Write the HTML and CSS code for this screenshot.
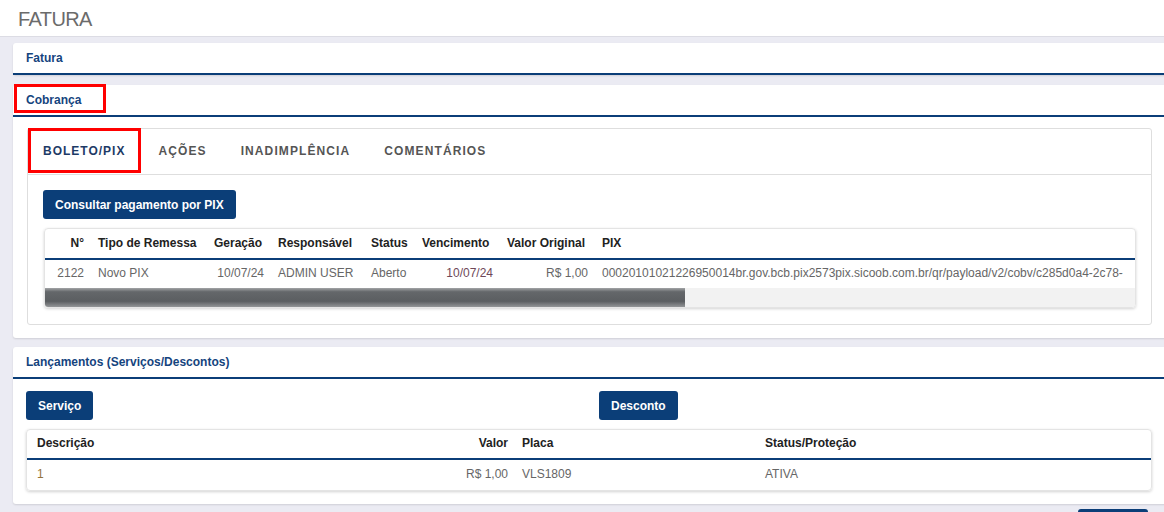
FILE: index.html
```html
<!DOCTYPE html>
<html lang="pt-BR">
<head>
  <meta charset="UTF-8">
  <meta name="viewport" content="width=device-width, initial-scale=1.0">
  <title>Fatura</title>
  <link rel="stylesheet" href="styles.css">
</head>
<body>
  <header class="page-title">FATURA</header>

  <main class="content">
    <!-- Fatura -->
    <section class="panel">
      <div class="panel-heading"><span class="panel-title">Fatura</span></div>
    </section>

    <!-- Cobrança -->
    <section class="panel">
      <div class="panel-heading">
        <span class="panel-title">Cobrança</span>
        <span class="mark mark-heading"></span>
      </div>
      <div class="panel-body">
        <div class="tab-card">
          <ul class="tabs">
            <li class="tab active">BOLETO/PIX<span class="mark mark-tab"></span></li>
            <li class="tab">AÇÕES</li>
            <li class="tab">INADIMPLÊNCIA</li>
            <li class="tab">COMENTÁRIOS</li>
          </ul>
          <div class="tab-content">
            <button class="btn">Consultar pagamento por PIX</button>
            <div class="grid-card">
              <div class="grid-scroll">
                <table class="grid grid-boleto">
                  <colgroup>
                    <col style="width: 46px">
                    <col style="width: 116px">
                    <col style="width: 64px">
                    <col style="width: 93px">
                    <col style="width: 51px">
                    <col style="width: 85px">
                    <col style="width: 95px">
                    <col style="width: 900px">
                  </colgroup>
                  <thead>
                    <tr>
                      <th class="right">N°</th>
                      <th>Tipo de Remessa</th>
                      <th>Geração</th>
                      <th>Responsável</th>
                      <th>Status</th>
                      <th>Vencimento</th>
                      <th>Valor Original</th>
                      <th>PIX</th>
                    </tr>
                  </thead>
                  <tbody>
                    <tr>
                      <td class="right">2122</td>
                      <td>Novo PIX</td>
                      <td class="right">10/07/24</td>
                      <td>ADMIN USER</td>
                      <td>Aberto</td>
                      <td class="right date-due">10/07/24</td>
                      <td class="right">R$ 1,00</td>
                      <td>00020101021226950014br.gov.bcb.pix2573pix.sicoob.com.br/qr/payload/v2/cobv/c285d0a4-2c78-</td>
                    </tr>
                  </tbody>
                </table>
              </div>
              <div class="scrollbar"><div class="scrollbar-thumb"></div></div>
            </div>
          </div>
        </div>
      </div>
    </section>

    <!-- Lançamentos -->
    <section class="panel">
      <div class="panel-heading"><span class="panel-title">Lançamentos (Serviços/Descontos)</span></div>
      <div class="panel-body panel-body-tight">
        <div class="actions">
          <div><button class="btn">Serviço</button></div>
          <div><button class="btn">Desconto</button></div>
        </div>
        <div class="grid-card">
          <table class="grid grid-lancamentos">
            <colgroup>
              <col style="width: 414px">
              <col style="width: 74px">
              <col style="width: 243px">
              <col>
            </colgroup>
            <thead>
              <tr>
                <th class="first">Descrição</th>
                <th class="right">Valor</th>
                <th>Placa</th>
                <th>Status/Proteção</th>
              </tr>
            </thead>
            <tbody>
              <tr>
                <td class="first item-code">1</td>
                <td class="right">R$ 1,00</td>
                <td>VLS1809</td>
                <td>ATIVA</td>
              </tr>
            </tbody>
          </table>
        </div>
      </div>
    </section>

    <div class="footer-actions">
      <button class="btn btn-wide" aria-label="Salvar"></button>
    </div>
  </main>
</body>
</html>
```

FILE: styles.css
```css
html, body {
  height: 100%;
}
body {
  font-family: "Liberation Sans", Arial, sans-serif;
  margin: 0;
  padding: 0;
  background-color: #ebebf3;
  color: #333;
  font-size: 12px;
  overflow: hidden;
}
.page-title {
  height: 37px;
  box-sizing: border-box;
  padding: 8px 0 0 18px;
  background: #fff;
  border-bottom: 1px solid #dcdce4;
  font-size: 20px;
  letter-spacing: -0.6px;
  color: #6b6b6b;
}
.content {
  padding: 6px 0 0 13px;
}
.panel {
  background: #fff;
  margin: 0 -2px 10px 0;
  border-radius: 3px 0 0 3px;
  box-shadow: 0 1px 2px rgba(0, 0, 0, 0.12);
}
.panel + .panel + .panel {
  margin-top: -1px;
  margin-bottom: 5px;
}
.panel-heading {
  position: relative;
  height: 30px;
  line-height: 30px;
  padding-left: 13px;
  border-bottom: 2px solid #0b3e78;
}
.panel-title {
  font-weight: bold;
  color: #15447e;
}
.panel-body {
  padding: 11px 14px 13px 14px;
}
.panel-body-tight {
  padding: 12px 14px 13px 13px;
}

/* red highlight boxes */
.mark {
  position: absolute;
  border: 3px solid #ff0000;
  box-sizing: border-box;
  pointer-events: none;
}
.mark-heading {
  left: 1px;
  top: -1px;
  width: 92px;
  height: 29px;
}
.mark-tab {
  left: 0;
  top: -1px;
  right: 0;
  bottom: 1px;
}

/* tabs */
.tab-card {
  border: 1px solid #dedede;
  border-radius: 3px;
}
.tabs {
  display: flex;
  list-style: none;
  margin: 0;
  padding: 0;
  height: 45px;
  border-bottom: 1px solid #dedede;
}
.tab {
  position: relative;
  padding: 0 17px;
  line-height: 45px;
  font-size: 12px;
  font-weight: bold;
  letter-spacing: 1.1px;
  color: #555;
}
.tab.active {
  padding: 0 16px 0 15px;
  letter-spacing: 1px;
  color: #1d3a66;
}
.tab-content {
  padding: 15px 15px 16px 15px;
}

/* buttons */
.btn {
  font-family: inherit;
  font-size: 12px;
  font-weight: bold;
  color: #fff;
  background: #0b3e78;
  border: none;
  border-radius: 3px;
  height: 29px;
  padding: 0 12px;
}
.btn-wide {
  width: 70px;
}
.actions {
  display: grid;
  grid-template-columns: 1fr 1fr;
  gap: 20px;
}

/* grids */
.grid-card {
  margin-top: 9px;
  margin-left: 1px;
  border-radius: 4px;
  border: 1px solid #e4e4e4;
  box-shadow: 0 1px 3px rgba(0, 0, 0, 0.18);
  overflow: hidden;
}
.panel-body-tight .grid-card {
  margin-left: 0;
}
.grid-scroll {
  overflow: hidden;
}
.grid {
  border-collapse: collapse;
  table-layout: fixed;
  white-space: nowrap;
}
.grid-boleto {
  width: 1450px;
}
.grid-lancamentos {
  width: 100%;
}
.grid th {
  height: 27px;
  padding: 0 7px 2px;
  text-align: left;
  font-weight: bold;
  color: #222;
  border-bottom: 2px solid #0b3e78;
}
.grid td {
  height: 26px;
  padding: 0 7px 2px;
  color: #666;
}
.grid-lancamentos th {
  height: 26px;
}
.grid-lancamentos td {
  height: 28px;
}
.grid .right {
  text-align: right;
}
.grid .first {
  padding-left: 10px;
}
.date-due {
  color: #6e4858 !important;
}
.item-code {
  color: #94743a !important;
}
.scrollbar {
  height: 19px;
  background: #f2f2f2;
}
.scrollbar-thumb {
  width: 640px;
  height: 100%;
  background: linear-gradient(#a3a5a7 0%, #64676a 20%, #5b5e61 70%, #939597 100%);
}

.footer-actions {
  display: flex;
  justify-content: flex-end;
  padding-right: 16px;
}
```
